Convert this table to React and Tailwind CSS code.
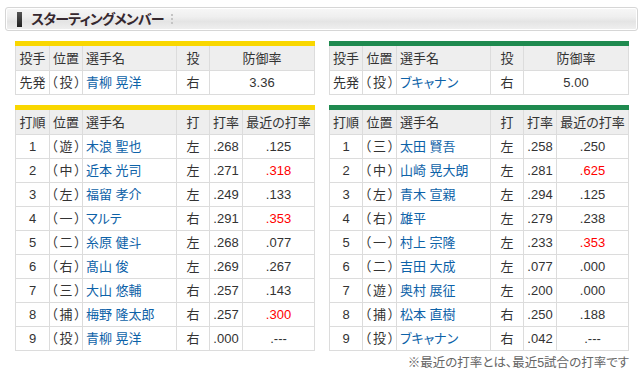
import React from "react";

const FONT = "font-['Liberation_Sans','Noto_Sans_CJK_JP',sans-serif] [font-feature-settings:'palt']";

const leftBat = [
  ["1", "（遊）", "木浪 聖也", "左", ".268", ".125", false],
  ["2", "（中）", "近本 光司", "左", ".271", ".318", true],
  ["3", "（左）", "福留 孝介", "左", ".249", ".133", false],
  ["4", "（一）", "マルテ", "右", ".291", ".353", true],
  ["5", "（二）", "糸原 健斗", "左", ".268", ".077", false],
  ["6", "（右）", "髙山 俊", "左", ".269", ".267", false],
  ["7", "（三）", "大山 悠輔", "右", ".257", ".143", false],
  ["8", "（捕）", "梅野 隆太郎", "右", ".257", ".300", true],
  ["9", "（投）", "青柳 晃洋", "右", ".000", ".---", false],
];

const rightBat = [
  ["1", "（三）", "太田 賢吾", "左", ".258", ".250", false],
  ["2", "（中）", "山崎 晃大朗", "左", ".281", ".625", true],
  ["3", "（左）", "青木 宣親", "左", ".294", ".125", false],
  ["4", "（右）", "雄平", "左", ".279", ".238", false],
  ["5", "（一）", "村上 宗隆", "左", ".233", ".353", true],
  ["6", "（二）", "吉田 大成", "左", ".077", ".000", false],
  ["7", "（遊）", "奥村 展征", "左", ".200", ".000", false],
  ["8", "（捕）", "松本 直樹", "右", ".250", ".188", false],
  ["9", "（投）", "ブキャナン", "右", ".042", ".---", false],
];

function Head({ children, left }) {
  return (
    <div
      className={
        "h-[24px] bg-[#eeeeee] flex items-center text-[#333] " +
        (left ? "justify-start pl-[3px]" : "justify-center")
      }
    >
      {children}
    </div>
  );
}

function Cell({ children, left, name, red, pos }) {
  let color = "text-[#333]";
  if (name) color = "text-[#0d62a8]";
  if (red) color = "text-[#ff0000]";
  return (
    <div
      className={
        "h-[23px] bg-white flex items-center whitespace-nowrap " +
        color +
        " " +
        (left ? "justify-start pl-[3px]" : "justify-center") +
        (pos ? " tracking-[2px] pl-[2px]" : "")
      }
    >
      {children}
    </div>
  );
}

function PitcherTable({ bar, cols, name, era }) {
  return (
    <div className="flex flex-col">
      <div className={"h-[5px] " + bar} />
      <div className={"grid gap-px bg-[#dcdcdc] px-px pb-px " + cols}>
        <Head>投手</Head>
        <Head>位置</Head>
        <Head left>選手名</Head>
        <Head>投</Head>
        <Head>防御率</Head>
        <Cell>先発</Cell>
        <Cell pos>（投）</Cell>
        <Cell left name>{name}</Cell>
        <Cell>右</Cell>
        <Cell>{era}</Cell>
      </div>
    </div>
  );
}

function BatTable({ bar, cols, rows }) {
  return (
    <div className="flex flex-col">
      <div className={"h-[5px] " + bar} />
      <div className={"grid gap-px bg-[#dcdcdc] px-px pb-px " + cols}>
        <Head>打順</Head>
        <Head>位置</Head>
        <Head left>選手名</Head>
        <Head>打</Head>
        <Head>打率</Head>
        <Head>最近の打率</Head>
        {rows.map((r) => (
          <React.Fragment key={r[0]}>
            <Cell>{r[0]}</Cell>
            <Cell pos>{r[1]}</Cell>
            <Cell left name>{r[2]}</Cell>
            <Cell>{r[3]}</Cell>
            <Cell>{r[4]}</Cell>
            <Cell red={r[6]}>{r[5]}</Cell>
          </React.Fragment>
        ))}
      </div>
    </div>
  );
}

export default function App() {
  return (
    <div className={"w-[639px] h-[387px] bg-white pt-[7px] text-[13px] leading-none " + FONT}>
      <div className="ml-[5px] w-[633px] h-[24px] rounded-[3px] border border-[#d6d6d6] shadow-[inset_0_0_0_1px_#ffffff] bg-[linear-gradient(to_bottom,#f7f7f7_0%,#efefef_40%,#e4e4e4_62%,#f0f0f0_100%)] flex items-center">
        <div className="ml-[11px] w-[5px] h-[15px] bg-[linear-gradient(to_bottom,#555555,#222222)]" />
        <div className="ml-[9px] text-[14px] font-bold text-[#36282f] tracking-[-0.8px]">スターティングメンバー</div>
        <div className="ml-[7px] flex flex-col gap-[2px]">
          <div className="w-[2px] h-[2px] bg-[#c4c4c4]" />
          <div className="w-[2px] h-[2px] bg-[#c4c4c4]" />
          <div className="w-[2px] h-[2px] bg-[#c4c4c4]" />
        </div>
      </div>

      <div className="ml-[15px] mt-[10px] flex gap-[14px]">
        <div className="w-[300px] flex flex-col gap-[10px]">
          <PitcherTable bar="bg-[#f9d700]" cols="grid-cols-[33px_32px_93px_32px_104px]" name="青柳 晃洋" era="3.36" />
          <BatTable bar="bg-[#f9d700]" cols="grid-cols-[33px_32px_93px_32px_32px_71px]" rows={leftBat} />
        </div>
        <div className="w-[300px] flex flex-col gap-[10px]">
          <PitcherTable bar="bg-[#1f8a4f]" cols="grid-cols-[32px_33px_93px_32px_104px]" name="ブキャナン" era="5.00" />
          <BatTable bar="bg-[#1f8a4f]" cols="grid-cols-[32px_33px_93px_32px_32px_71px]" rows={rightBat} />
        </div>
      </div>

      <div className="w-[629px] mt-[3px] text-right text-[12.5px] leading-[18px] text-[#666]">
        ※最近の打率とは、最近5試合の打率です
      </div>
    </div>
  );
}
